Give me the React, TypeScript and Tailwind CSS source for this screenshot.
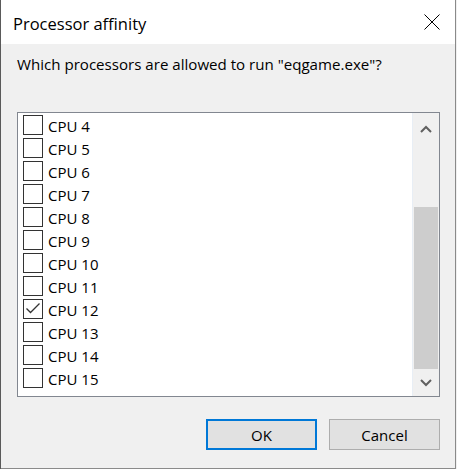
import React from 'react';

const cpus = [4, 5, 6, 7, 8, 9, 10, 11, 12, 13, 14, 15];
const checked = [12];

function Checkbox({ on }: { on: boolean }) {
  return (
    <div className="w-[20px] h-[20px] border border-[#333333] bg-white shrink-0">
      {on && (
        <svg width="18" height="18" viewBox="0 0 18 18">
          <path d="M2.5 8.5 L6.5 12.5 L15.5 3.5" fill="none" stroke="#333333" strokeWidth="1.3" />
        </svg>
      )}
    </div>
  );
}

function Chevron({ up }: { up: boolean }) {
  return (
    <svg width="12" height="8" viewBox="0 0 12 8">
      <path
        d={up ? 'M1 7 L6 2 L11 7' : 'M1 1 L6 6 L11 1'}
        fill="none"
        stroke="#606060"
        strokeWidth="2"
      />
    </svg>
  );
}

export default function App() {
  return (
    <div className="w-[457px] h-[469px] flex bg-[#f0f0f0] font-['Open_Sans',sans-serif] text-[15px] text-black">
      <div className="w-px bg-[#5a5a5a]" />
      <div className="w-[455px] flex flex-col border-r border-b border-[#8a8a8a]">
        {/* title bar */}
        <div className="h-[44px] bg-white flex items-center justify-between pl-[12px] pr-[15px] shrink-0">
          <span className="text-[16.5px] leading-[22px] pt-[3px]">Processor affinity</span>
          <svg width="16" height="16" viewBox="0 0 16 16">
            <path d="M0.5 0.5 L15.5 15.5 M15.5 0.5 L0.5 15.5" stroke="#000" strokeWidth="1" />
          </svg>
        </div>

        <div className="flex flex-col px-[16px]">
          <p className="mt-[10px] leading-[20px] text-[15.1px]">Which processors are allowed to run "eqgame.exe"?</p>

          {/* list box */}
          <div className="mt-[38px] w-[423px] h-[285px] border border-[#828790] bg-white flex">
            <div className="flex-1 flex flex-col">
              {cpus.map((n) => (
                <div key={n} className="h-[23px] flex items-center pl-[5px] gap-[5px]">
                  <Checkbox on={checked.includes(n)} />
                  <span className="leading-[20px] pt-[2px]">CPU {n}</span>
                </div>
              ))}
            </div>
            <div className="w-[27px] border-l border-[#e8eef5] bg-[#f0f0f0] flex flex-col">
              <div className="h-[32px] flex items-center justify-center">
                <Chevron up />
              </div>
              <div className="h-[62px]" />
              <div className="h-[162px] mx-px bg-[#cdcdcd]" />
              <div className="flex-1 flex items-center justify-center">
                <Chevron up={false} />
              </div>
            </div>
          </div>

          {/* buttons */}
          <div className="mt-[22px] w-[423px] flex justify-end gap-[12px]">
            <button className="w-[111px] h-[31px] border-2 border-[#0078d7] bg-[#e1e1e1] leading-[20px]">
              OK
            </button>
            <button className="w-[111px] h-[31px] border border-[#adadad] bg-[#e1e1e1] leading-[20px]">
              Cancel
            </button>
          </div>
        </div>
      </div>
    </div>
  );
}
